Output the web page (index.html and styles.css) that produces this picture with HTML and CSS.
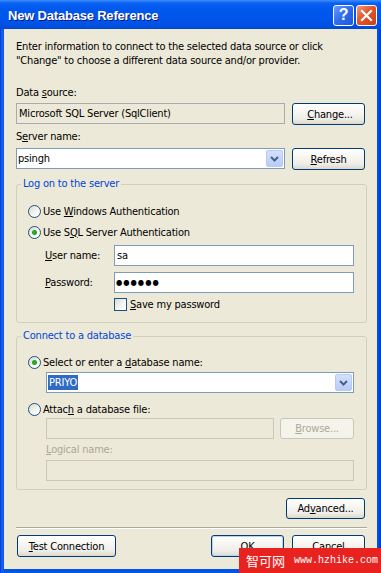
FILE: index.html
```html
<!DOCTYPE html>
<html lang="en">
<head>
    <meta charset="UTF-8">
    <title>New Database Reference</title>
    <link rel="stylesheet" href="styles.css">
</head>
<body>
    <div class="window">
        <div class="titlebar">
            <span class="title">New Database Reference</span>
            <div class="caption-buttons">
                <span class="cap help">?</span>
                <span class="cap close">
                    <svg width="13" height="13" viewBox="0 0 13 13"><path d="M2 2 L11 11 M11 2 L2 11" stroke="#fff" stroke-width="2.2" stroke-linecap="square"/></svg>
                </span>
            </div>
        </div>

        <div class="client">
            <p class="intro">Enter information to connect to the selected data source or click<br>"Change" to choose a different data source and/or provider.</p>

            <div class="caption first">Data <u>s</u>ource:</div>
            <div class="row source-row">
                <div class="textbox readonly source">Microsoft SQL Server (SqlClient)</div>
                <button class="btn">&nbsp;<u>C</u>hange...</button>
            </div>

            <div class="caption">S<u>e</u>rver name:</div>
            <div class="row server-row">
                <div class="combo source">
                    <span class="value">psingh</span>
                    <span class="drop"><svg width="9" height="6" viewBox="0 0 9 6"><path d="M1 1 L4.5 4.5 L8 1" fill="none" stroke="#4D6185" stroke-width="2"/></svg></span>
                </div>
                <button class="btn"><u>R</u>efresh</button>
            </div>

            <fieldset class="group logon">
                <legend>Log on to the server</legend>
                <label class="option"><span class="radio"></span><span>Use <u>W</u>indows Authentication</span></label>
                <label class="option second"><span class="radio checked"></span><span>Use S<u>Q</u>L Server Authentication</span></label>
                <div class="field user">
                    <span class="field-name"><u>U</u>ser name:</span>
                    <div class="textbox">sa</div>
                </div>
                <div class="field password">
                    <span class="field-name"><u>P</u>assword:</span>
                    <div class="textbox dots">&#9679;&#9679;&#9679;&#9679;&#9679;&#9679;</div>
                </div>
                <label class="check"><span class="checkbox"></span><span><u>S</u>ave my password</span></label>
            </fieldset>

            <fieldset class="group database">
                <legend>Connect to a database</legend>
                <label class="option"><span class="radio checked"></span><span>Select or enter a <u>d</u>atabase name:</span></label>
                <div class="combo indent db-name">
                    <span class="value"><span class="selected">PRIYO</span></span>
                    <span class="drop"><svg width="9" height="6" viewBox="0 0 9 6"><path d="M1 1 L4.5 4.5 L8 1" fill="none" stroke="#4D6185" stroke-width="2"/></svg></span>
                </div>
                <label class="option attach"><span class="radio"></span><span>Attac<u>h</u> a database file:</span></label>
                <div class="file-row indent">
                    <div class="textbox disabled"></div>
                    <button class="btn browse" disabled><u>B</u>rowse...</button>
                </div>
                <div class="caption indent muted"><u>L</u>ogical name:</div>
                <div class="textbox disabled indent logical"></div>
            </fieldset>

            <div class="advanced-row">
                <button class="btn advanced">Ad<u>v</u>anced...</button>
            </div>

            <div class="separator"></div>

            <div class="footer">
                <button class="btn test"><u>T</u>est Connection</button>
                <button class="btn default">OK</button>
                <button class="btn">Cancel</button>
            </div>
        </div>

        <div class="watermark">
            <span class="wm-name">智可网</span>
            <span class="wm-url">www.hzhike.com</span>
        </div>
    </div>
</body>
</html>
```

FILE: styles.css
```css
* {
    margin: 0;
    padding: 0;
    box-sizing: border-box;
}

body {
    width: 381px;
    height: 573px;
    overflow: hidden;
    font-family: "DejaVu Sans Condensed", "Liberation Sans", sans-serif;
    font-size: 11px;
    letter-spacing: -0.2px;
    color: #000;
}

u {
    text-decoration: underline;
    text-underline-offset: 1px;
}

.window {
    position: relative;
    width: 381px;
    height: 573px;
    display: flex;
    flex-direction: column;
    padding-bottom: 4px;
    background: linear-gradient(90deg, #0831D9 0, #166AEE 2px, #0055E5 4px, #0055E5 377px, #0048D8 379px, #0831D9 381px);
}

/* title bar */

.titlebar {
    height: 29px;
    display: flex;
    align-items: center;
    padding: 1px 4px 0 8px;
    background: linear-gradient(#3D8DFF 0, #0A62F2 3px, #0058EE 9px, #0056EA 20px, #0050E2 26px, #0046D2 29px);
}

.title {
    font-family: "Liberation Sans", sans-serif;
    font-weight: bold;
    font-size: 13px;
    color: #fff;
    text-shadow: 1px 1px #0A1883;
    letter-spacing: -0.2px;
}

.caption-buttons {
    margin-left: auto;
    display: flex;
    gap: 2px;
}

.cap {
    width: 21px;
    height: 21px;
    border: 1px solid #fff;
    border-radius: 3px;
    display: flex;
    align-items: center;
    justify-content: center;
    color: #fff;
}

.help {
    background: linear-gradient(135deg, #6C9CF8, #2E6BEF 50%, #1E58DC);
    font-family: "Liberation Sans", sans-serif;
    font-weight: bold;
    font-size: 16px;
}

.close {
    background: linear-gradient(135deg, #F19A7A, #E2552A 45%, #CD3E14);
}

/* client area */

.client {
    flex: 1;
    margin: 0 4px;
    background: #ECE9D8;
    padding: 11px 10px 0 12px;
}

.intro {
    line-height: 14px;
}

.caption {
    line-height: 14px;
    margin-top: 5px;
}

.caption.first {
    margin-top: 18px;
}

.row {
    display: flex;
    gap: 7px;
    padding-right: 2px;
}

.source-row {
    margin-top: 3px;
}

.server-row {
    margin-top: 4px;
}

.source {
    width: 269px;
    flex: none;
}

.textbox {
    height: 21px;
    border: 1px solid #7F9DB9;
    background: #fff;
    padding: 0 2px;
    line-height: 19px;
    white-space: nowrap;
    overflow: hidden;
}

.textbox.readonly {
    background: #ECE9D8;
    border-color: #A5ACB2;
}

.textbox.disabled {
    background: #ECE9D8;
    border-color: #C9C7BA;
}

.dots {
    font-size: 8px;
    letter-spacing: 1px;
    padding-left: 1px;
}

.combo {
    height: 21px;
    border: 1px solid #7F9DB9;
    background: #fff;
    display: flex;
    align-items: center;
    padding: 1px;
}

.combo .value {
    flex: 1;
    line-height: 17px;
}

.combo .selected {
    background: #316AC5;
    color: #fff;
    padding: 1px 1px;
}

.drop {
    width: 17px;
    height: 17px;
    border-radius: 2px;
    background: linear-gradient(#D3E0FC, #B9CCF7);
    border: 1px solid #B8C9F2;
    display: flex;
    align-items: center;
    justify-content: center;
}

/* buttons */

.btn {
    width: 73px;
    height: 22px;
    border: 1px solid #003C74;
    border-radius: 3px;
    background: linear-gradient(#FFFFFF, #F7F6F2 40%, #EEEDE7 75%, #DCD8CC);
    font-family: inherit;
    font-size: 11px;
    letter-spacing: inherit;
    color: #000;
}

.btn.default {
    box-shadow: inset 0 0 0 1px #B9D1F6;
    margin-left: auto;
}

.btn:disabled {
    border-color: #C9C7BA;
    background: #F5F4EA;
    color: #ACA899;
}

/* group boxes */

.group {
    border: 1px solid #D0D0BF;
    border-radius: 3px;
    min-width: 0;
}

.group legend {
    color: #0046D5;
    line-height: 14px;
    padding: 0 2px;
    margin-left: -7px;
}

.logon {
    margin-top: 7px;
    padding: 12px 12px 11px 11px;
}

.database {
    margin-top: 6px;
    padding: 11px 12px 8px 11px;
}

.option {
    display: flex;
    align-items: center;
    gap: 2px;
    height: 16px;
}

.option.second {
    margin-top: 5px;
}

.option.attach {
    margin-top: 8px;
}

.radio {
    width: 13px;
    height: 13px;
    border-radius: 50%;
    border: 1px solid #1C5180;
    background: linear-gradient(135deg, #DCDCD4, #F6F6F3 60%, #FFFFFF);
}

.radio.checked {
    background: radial-gradient(circle, #2DB52D 0, #21A121 2px, transparent 3px), linear-gradient(135deg, #DCDCD4, #F6F6F3 60%, #FFFFFF);
}

.field {
    display: flex;
    align-items: center;
    padding-left: 17px;
}

.field .textbox {
    flex: 1;
}

.field.user {
    margin-top: 5px;
}

.field.password {
    margin-top: 6px;
}

.field-name {
    width: 69px;
}

.check {
    display: flex;
    align-items: center;
    gap: 3px;
    margin-top: 5px;
    margin-left: 86px;
    height: 13px;
}

.checkbox {
    width: 13px;
    height: 13px;
    border: 1px solid #1C5180;
    background: linear-gradient(135deg, #DCDCD4, #F6F6F3 60%, #FFFFFF);
}

.indent {
    margin-left: 18px;
}

.db-name {
    margin-top: 2px;
}

.file-row {
    display: flex;
    gap: 6px;
    margin-top: 1px;
}

.file-row .textbox {
    flex: 1;
}

.btn.browse {
    width: 74px;
    height: 21px;
}

.caption.muted {
    color: #ACA899;
    margin-top: 4px;
}

.logical {
    margin-top: 3px;
}

/* bottom */

.advanced-row {
    display: flex;
    justify-content: flex-end;
    padding-right: 2px;
    margin-top: 8px;
}

.btn.advanced {
    width: 79px;
    height: 21px;
}

.separator {
    margin-top: 8px;
    height: 2px;
    border-top: 1px solid #ACA899;
    border-bottom: 1px solid #FFFFFF;
}

.footer {
    display: flex;
    gap: 8px;
    margin-top: 6px;
    padding-right: 2px;
}

.btn.test {
    width: 99px;
    margin-left: 1px;
}

/* site watermark over the corner */

.watermark {
    position: absolute;
    right: 0;
    bottom: 0;
    width: 142px;
    height: 25px;
    background: #E8221F;
    color: #fff;
    display: flex;
    align-items: center;
    padding-left: 7px;
    gap: 9px;
    letter-spacing: 0;
}

.wm-name {
    font-family: "Noto Sans CJK SC", sans-serif;
    font-size: 13px;
}

.wm-url {
    font-family: "Liberation Mono", monospace;
    font-size: 10px;
}
```
